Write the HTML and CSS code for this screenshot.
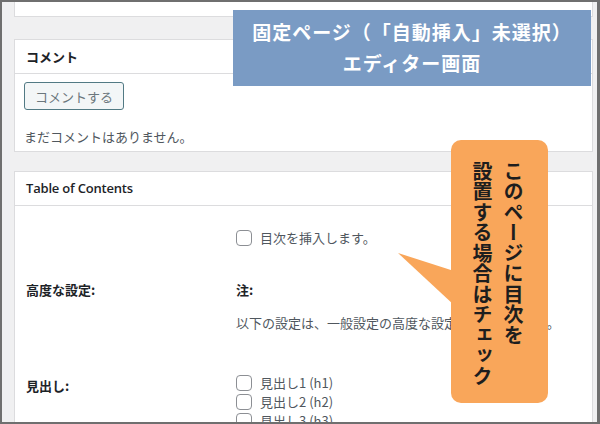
FILE: index.html
```html
<!DOCTYPE html>
<html lang="ja">
<head>
    <meta charset="UTF-8">
    <title>固定ページ エディター画面</title>
    <link rel="stylesheet" href="styles.css">
</head>
<body>
    <div class="frame">
        <div class="column">
            <div class="panel panel-top"></div>

            <!-- コメント -->
            <div class="panel panel-comment">
                <div class="panel-head jp">コメント</div>
                <div class="panel-body">
                    <button class="btn">コメントする</button>
                    <p class="muted">まだコメントはありません。</p>
                </div>
            </div>

            <!-- 目次 -->
            <div class="panel panel-toc">
                <div class="panel-head en">Table of Contents</div>
                <div class="settings">
                    <div class="th"></div>
                    <div class="td row-insert">
                        <label class="check"><span class="box"></span>目次を挿入します。</label>
                    </div>

                    <div class="th row-adv">高度な設定:</div>
                    <div class="td row-adv">
                        <div class="note">注:</div>
                        <p class="desc">以下の設定は、一般設定の高度な設定を上書きします。</p>
                    </div>

                    <div class="th row-head th-head">見出し:</div>
                    <div class="td row-head">
                        <label class="check small"><span class="box"></span>見出し1 (h1)</label>
                        <label class="check small"><span class="box"></span>見出し2 (h2)</label>
                        <label class="check small"><span class="box"></span>見出し3 (h3)</label>
                    </div>
                </div>
            </div>
        </div>

        <!-- 注釈 -->
        <div class="note-blue">
            <div>固定ページ（「自動挿入」未選択）</div>
            <div>エディター画面</div>
        </div>

        <svg class="tail" width="60" height="60" viewBox="0 0 60 60">
            <polygon points="0,2 56,20 56,54" fill="#f9a65a"/>
        </svg>
        <div class="note-orange">このページに目次を<br>設置する場合はチェック</div>
    </div>
</body>
</html>
```

FILE: styles.css
```css
body {
    margin: 0;
    padding: 0;
    font-family: "Noto Sans CJK JP", "Noto Sans", sans-serif;
    font-size: 13px;
    color: #1d2327;
}

.frame {
    position: relative;
    width: 600px;
    height: 424px;
    box-sizing: border-box;
    border: 2px solid #6f6f6f;
    border-right-width: 3px;
    background-color: #f0f0f1;
    overflow: hidden;
}

.column {
    padding: 0 4px 0 12px;
}

.panel {
    background-color: #fff;
    border: 1px solid #dcdcde;
}

.panel-top {
    height: 14px;
    border-top: none;
}

.panel-comment {
    margin-top: 22px;
}

.panel-toc {
    margin-top: 19px;
}

.panel-head {
    height: 33px;
    line-height: 33px;
    padding-left: 11px;
    border-bottom: 1px solid #dcdcde;
    font-weight: 700;
    font-size: 13px;
}

.panel-head.en {
    font-family: "Open Sans", "Noto Sans", sans-serif;
    font-weight: 600;
    font-size: 13px;
    letter-spacing: -0.2px;
}

.panel-body {
    padding: 8px 10px 4px 9px;
}

.btn {
    display: block;
    height: 28px;
    padding: 0 10px;
    font-family: "Noto Sans CJK JP", sans-serif;
    font-size: 13px;
    color: #6b777d;
    background-color: #f3f6f7;
    border: 1px solid #527a84;
    border-radius: 3px;
}

.muted {
    margin: 17px 0 0;
    line-height: 20px;
    color: #50575e;
}

.settings {
    display: grid;
    grid-template-columns: 210px 1fr;
    padding: 22px 0 0 11px;
}

.th {
    font-weight: 700;
    line-height: 20px;
}

.td {
    color: #50575e;
}

.row-adv {
    margin-top: 32px;
}

.row-head {
    margin-top: 40px;
}

.th-head {
    padding-top: 3px;
}

.check {
    display: flex;
    align-items: center;
    gap: 8px;
    height: 20px;
    line-height: 20px;
}

.check.small {
    height: 19px;
}

.box {
    width: 14px;
    height: 14px;
    border: 1px solid #8c8f94;
    border-radius: 4px;
    background-color: #fff;
}

.note {
    font-weight: 700;
    color: #1d2327;
    line-height: 20px;
}

.desc {
    margin: 13px 0 0;
    line-height: 20px;
    white-space: nowrap;
}

.note-blue {
    position: absolute;
    left: 231px;
    top: 8px;
    width: 358px;
    height: 76px;
    padding-top: 6px;
    box-sizing: border-box;
    background-color: #7a9bc4;
    color: #fff;
    font-weight: 700;
    font-size: 19px;
    letter-spacing: 1px;
    line-height: 31px;
    text-align: center;
    text-spacing-trim: space-all;
}

.tail {
    position: absolute;
    left: 396px;
    top: 249px;
}

.note-orange {
    position: absolute;
    left: 449px;
    top: 138px;
    width: 97px;
    height: 263px;
    box-sizing: border-box;
    padding: 21px 19px 0 0;
    border-radius: 10px;
    background-color: #f9a65a;
    color: #1e1e1e;
    font-weight: 700;
    font-size: 20px;
    letter-spacing: 0.5px;
    line-height: 31px;
    writing-mode: vertical-rl;
}
```
